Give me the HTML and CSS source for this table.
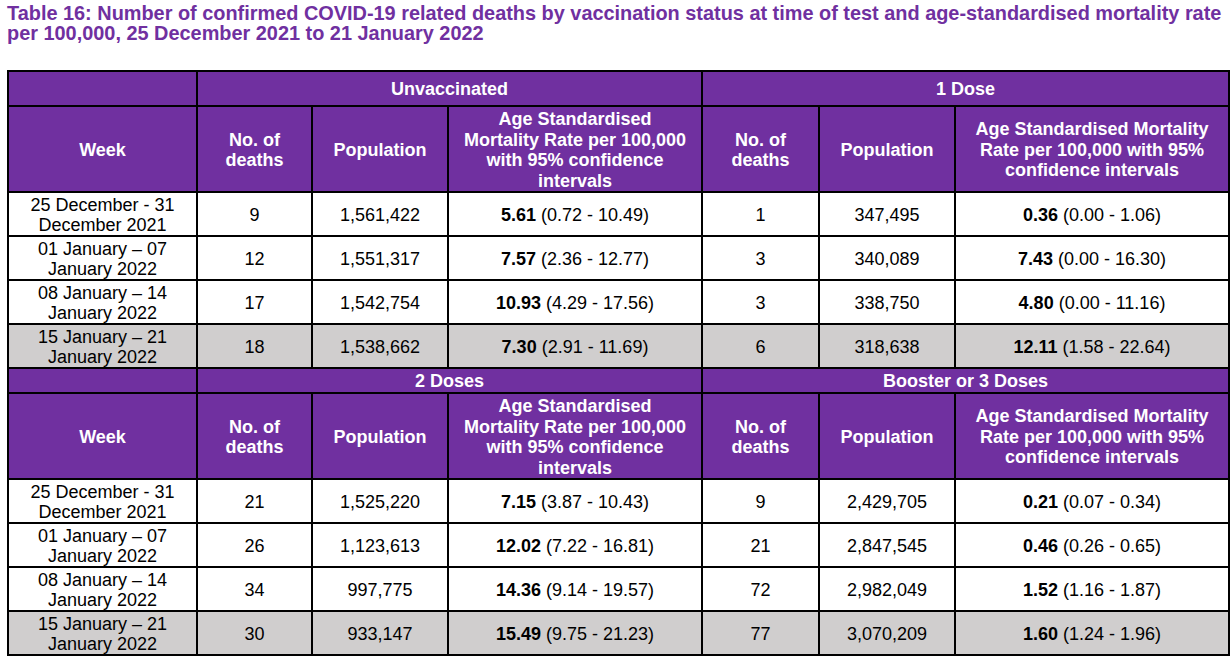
FILE: index.html
```html
<!DOCTYPE html>
<html>
<head>
<meta charset="utf-8">
<link rel="stylesheet" href="styles.css">
</head>
<body>
<h1 class="title">Table 16: Number of confirmed COVID-19 related deaths by vaccination status at time of test and age-standardised mortality rate per 100,000, 25 December 2021 to 21 January 2022</h1>
<table class="data">
<colgroup>
<col class="c-week"><col class="c-deaths"><col class="c-pop"><col class="c-rate">
<col class="c-deaths2"><col class="c-pop"><col class="c-rate2">
</colgroup>
<tbody>
<tr class="group first"><th></th><th colspan="3">Unvaccinated</th><th colspan="3">1 Dose</th></tr>
<tr class="head"><th>Week</th><th>No. of<br>deaths</th><th>Population</th><th>Age Standardised<br>Mortality Rate per 100,000<br>with 95% confidence<br>intervals</th><th>No. of<br>deaths</th><th>Population</th><th>Age Standardised Mortality<br>Rate per 100,000 with 95%<br>confidence intervals</th></tr>
<tr class="row"><td class="wk">25 December - 31<br>December 2021</td><td>9</td><td>1,561,422</td><td><b>5.61</b> (0.72 - 10.49)</td><td>1</td><td>347,495</td><td><b>0.36</b> (0.00 - 1.06)</td></tr>
<tr class="row"><td class="wk">01 January – 07<br>January 2022</td><td>12</td><td>1,551,317</td><td><b>7.57</b> (2.36 - 12.77)</td><td>3</td><td>340,089</td><td><b>7.43</b> (0.00 - 16.30)</td></tr>
<tr class="row"><td class="wk">08 January – 14<br>January 2022</td><td>17</td><td>1,542,754</td><td><b>10.93</b> (4.29 - 17.56)</td><td>3</td><td>338,750</td><td><b>4.80</b> (0.00 - 11.16)</td></tr>
<tr class="row shade"><td class="wk">15 January – 21<br>January 2022</td><td>18</td><td>1,538,662</td><td><b>7.30</b> (2.91 - 11.69)</td><td>6</td><td>318,638</td><td><b>12.11</b> (1.58 - 22.64)</td></tr>
<tr class="group second"><th></th><th colspan="3">2 Doses</th><th colspan="3">Booster or 3 Doses</th></tr>
<tr class="head"><th>Week</th><th>No. of<br>deaths</th><th>Population</th><th>Age Standardised<br>Mortality Rate per 100,000<br>with 95% confidence<br>intervals</th><th>No. of<br>deaths</th><th>Population</th><th>Age Standardised Mortality<br>Rate per 100,000 with 95%<br>confidence intervals</th></tr>
<tr class="row"><td class="wk">25 December - 31<br>December 2021</td><td>21</td><td>1,525,220</td><td><b>7.15</b> (3.87 - 10.43)</td><td>9</td><td>2,429,705</td><td><b>0.21</b> (0.07 - 0.34)</td></tr>
<tr class="row"><td class="wk">01 January – 07<br>January 2022</td><td>26</td><td>1,123,613</td><td><b>12.02</b> (7.22 - 16.81)</td><td>21</td><td>2,847,545</td><td><b>0.46</b> (0.26 - 0.65)</td></tr>
<tr class="row"><td class="wk">08 January – 14<br>January 2022</td><td>34</td><td>997,775</td><td><b>14.36</b> (9.14 - 19.57)</td><td>72</td><td>2,982,049</td><td><b>1.52</b> (1.16 - 1.87)</td></tr>
<tr class="row shade"><td class="wk">15 January – 21<br>January 2022</td><td>30</td><td>933,147</td><td><b>15.49</b> (9.75 - 21.23)</td><td>77</td><td>3,070,209</td><td><b>1.60</b> (1.24 - 1.96)</td></tr>
</tbody>
</table>
</body>
</html>
```
FILE: styles.css
```css
html, body {
  margin: 0;
  padding: 0;
  background: #ffffff;
}
body {
  padding: 3px 0 0 7px;
  font-family: "Liberation Sans", Arial, sans-serif;
  color: #000;
}
.title {
  margin: 0 0 27px 0;
  font-size: 19.9px;
  line-height: 20px;
  font-weight: bold;
  color: #7030a0;
}
.data {
  border-collapse: collapse;
  table-layout: fixed;
  width: 1221px;
  font-size: 18px;
}
.c-week { width: 189px; }
.c-deaths { width: 115px; }
.c-pop { width: 136px; }
.c-rate { width: 254px; }
.c-deaths2 { width: 117px; }
.c-rate2 { width: 274px; }
.data th, .data td {
  border: 2px solid #000;
  padding: 2px 2px 0 2px;
  text-align: center;
  vertical-align: middle;
}
.data th {
  background: #7030a0;
  color: #fff;
  font-weight: bold;
  line-height: 20.5px;
}
.group.first { height: 35px; }
.group.second { height: 25px; }
.group.second th { line-height: 18px; padding-top: 1px; }
.head { height: 86px; }
.row { height: 44px; }
.row td { line-height: 20px; }
.shade td { background: #d0cece; }
```
